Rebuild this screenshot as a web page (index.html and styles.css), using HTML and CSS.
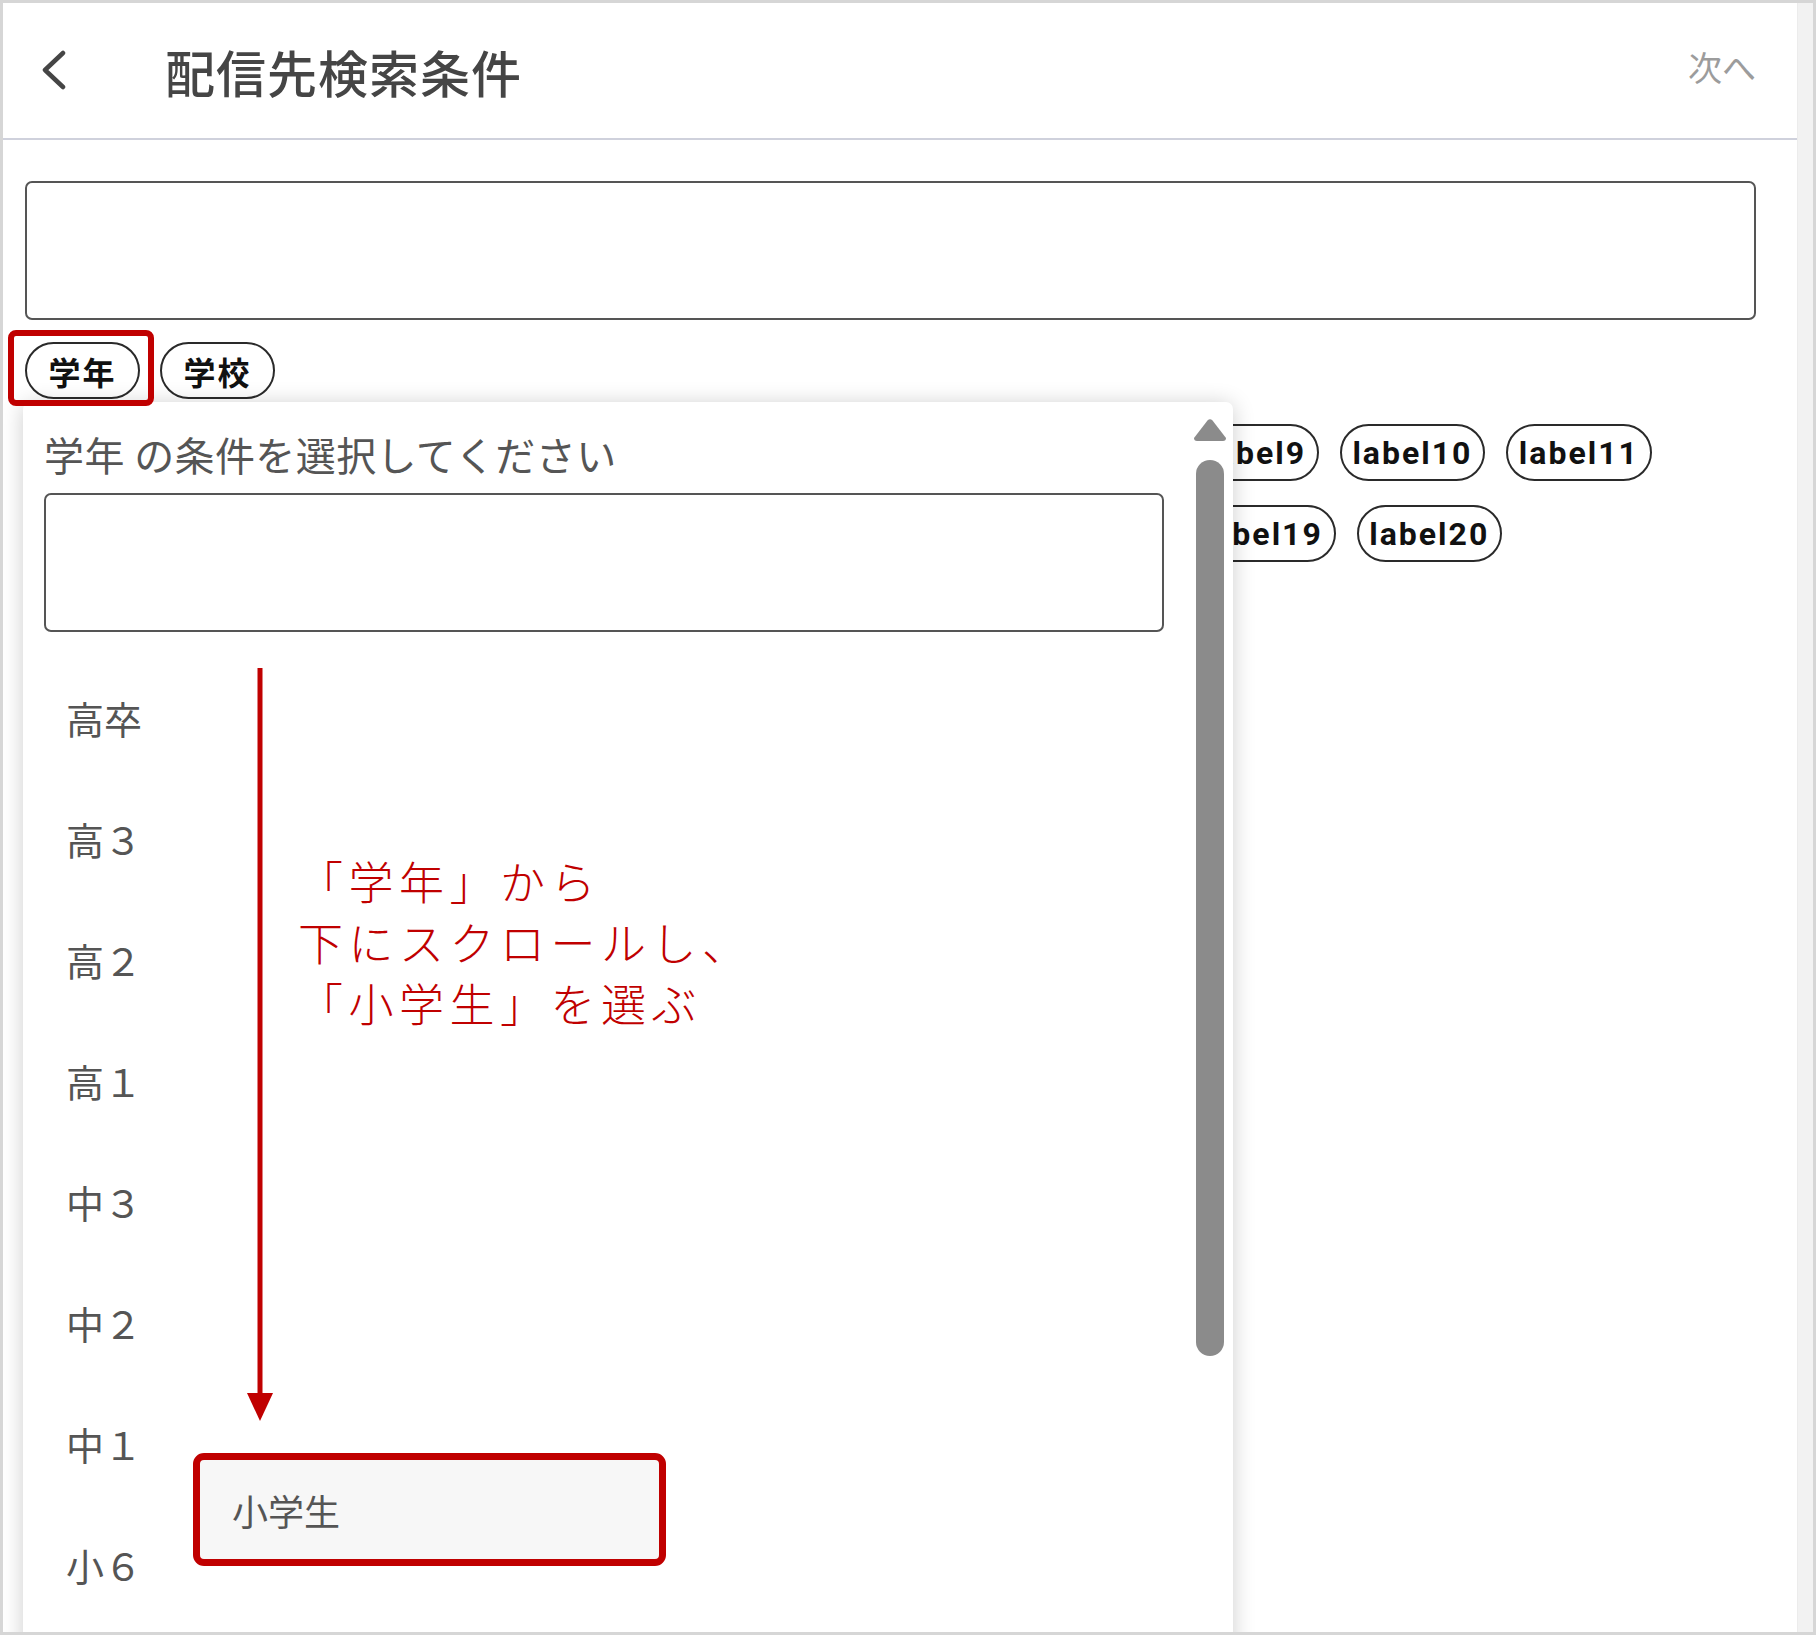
FILE: index.html
```html
<!DOCTYPE html>
<html lang="ja">
<head>
<meta charset="utf-8">
<title>配信先検索条件</title>
<link rel="stylesheet" href="styles.css">
</head>
<body>
<div class="frame">
  <div class="main">
    <header class="topbar">
      <svg class="back" width="26" height="40" viewBox="0 0 26 40"><polyline points="22,3 4,20 22,37" fill="none" stroke="#454545" stroke-width="4.5" stroke-linecap="round" stroke-linejoin="round"/></svg>
      <h1 class="title">配信先検索条件</h1>
      <span class="next">次へ</span>
    </header>
    <section class="content">
      <div class="search-box"></div>
      <div class="cat-row">
        <span class="chip cat">学年</span>
        <span class="chip cat">学校</span>
      </div>
      <div class="label-grid">
        <span class="chip lbl">label1</span>
        <span class="chip lbl">label2</span>
        <span class="chip lbl">label3</span>
        <span class="chip lbl">label4</span>
        <span class="chip lbl">label5</span>
        <span class="chip lbl">label6</span>
        <span class="chip lbl">label7</span>
        <span class="chip lbl">label8</span>
        <span class="chip lbl">label9</span>
        <span class="chip lbl">label10</span>
        <span class="chip lbl">label11</span>
        <span class="chip lbl">label12</span>
        <span class="chip lbl">label13</span>
        <span class="chip lbl">label14</span>
        <span class="chip lbl">label15</span>
        <span class="chip lbl">label16</span>
        <span class="chip lbl">label17</span>
        <span class="chip lbl">label18</span>
        <span class="chip lbl">label19</span>
        <span class="chip lbl">label20</span>
      </div>
    </section>
  </div>
  <div class="page-scroll"></div>

  <div class="dropdown">
    <div class="dd-body">
      <p class="dd-label">学年 の条件を選択してください</p>
      <div class="dd-input"></div>
      <ul class="dd-list">
        <li>高卒</li>
        <li>高３</li>
        <li>高２</li>
        <li>高１</li>
        <li>中３</li>
        <li>中２</li>
        <li>中１</li>
        <li>小６</li>
      </ul>
    </div>
    <div class="dd-scroll">
      <svg class="dd-up" width="32" height="23" viewBox="0 0 32 23"><path d="M13.5 2.5 Q16 0 18.5 2.5 L32 20 Q32 23 29 23 L3 23 Q0 23 0 20 Z" fill="#8b8b8b"/></svg>
      <div class="dd-thumb"></div>
    </div>
  </div>

  <div class="mark-chip"></div>
  <svg class="arrow" width="30" height="753" viewBox="0 0 30 753"><line x1="16" y1="0" x2="16" y2="728" stroke="#c00000" stroke-width="5"/><polygon points="3,725 29,725 16,753" fill="#c00000"/></svg>
  <p class="note">「学年」から<br>下にスクロールし、<br>「小学生」を選ぶ</p>
  <div class="mark-option"><span>小学生</span></div>
</div>
</body>
</html>
```

FILE: styles.css
```css
* { box-sizing: border-box; }
html, body { margin: 0; padding: 0; background: #fff; }
body { font-family: "Noto Sans CJK JP", "Noto Sans", sans-serif; }

.frame {
  position: relative;
  width: 1816px;
  height: 1635px;
  border: 3px solid #d6d6d6;
  overflow: hidden;
  display: flex;
  background: #fff;
}
.main { flex: 1; min-width: 0; }
.page-scroll { width: 16px; background: #f2f2f2; border-left: 1px solid #ececec; }

.topbar {
  height: 137px;
  border-bottom: 2px solid #cfd1dc;
  display: flex;
  align-items: center;
  padding: 0 41px 0 38px;
}
.back { display: block; margin-top: -2px; }
.title {
  margin: 0 0 0 98px;
  font-size: 50px;
  font-weight: 500;
  color: #454545;
  letter-spacing: 1px;
  line-height: 1;
}
.next {
  margin-left: auto;
  font-size: 34px;
  color: #9c9c9c;
  line-height: 1;
  margin-top: -8px;
}

.content { padding: 41px 41px 0 22px; }
.search-box {
  height: 139px;
  border: 2px solid #555;
  border-radius: 7px;
}
.cat-row { display: flex; gap: 20px; margin-top: 22px; }
.label-grid {
  display: flex;
  flex-wrap: wrap;
  column-gap: 21px;
  row-gap: 24px;
  margin-top: 25px;
}
.chip {
  display: inline-flex;
  align-items: center;
  justify-content: center;
  height: 57px;
  border: 2px solid #2a2a2a;
  border-radius: 29px;
  color: #111;
  font-weight: 700;
  line-height: 1;
  font-size: 32px;
}
.chip.cat { width: 115px; letter-spacing: 2px; font-family: "Noto Sans CJK JP", sans-serif; }
.chip.lbl { padding: 0 10.7px; font-family: Roboto, "Noto Sans", sans-serif; letter-spacing: 2px; }

.dropdown {
  position: absolute;
  left: 20px;
  top: 399px;
  width: 1210px;
  bottom: -40px;
  background: #fff;
  border-radius: 7px;
  box-shadow: 0 2px 22px rgba(0, 0, 0, 0.2);
  display: flex;
}
.dd-body { flex: 1; padding: 28px 22px 0 21px; }
.dd-label {
  margin: 0;
  font-size: 40px;
  line-height: 48px;
  letter-spacing: 0.4px;
  color: #555;
  white-space: nowrap;
}
.dd-input {
  margin-top: 15px;
  height: 139px;
  border: 2px solid #555;
  border-radius: 7px;
}
.dd-list { list-style: none; margin: 25px 0 0; padding: 0; }
.dd-list li {
  height: 121px;
  line-height: 121px;
  padding-left: 22px;
  font-size: 38px;
  letter-spacing: 0;
  color: #555;
}
.dd-scroll {
  width: 47px;
  display: flex;
  flex-direction: column;
  align-items: center;
  padding-top: 16px;
}
.dd-up { display: block; }
.dd-thumb {
  margin-top: 19px;
  width: 28px;
  height: 896px;
  border-radius: 14px;
  background: #8b8b8b;
}

.mark-chip {
  position: absolute;
  left: 5px;
  top: 327px;
  width: 146px;
  height: 76px;
  border: 6px solid #c00000;
  border-radius: 8px;
}
.arrow { position: absolute; left: 241px; top: 665px; display: block; }
.note {
  position: absolute;
  left: 295px;
  top: 847px;
  margin: 0;
  font-family: "Noto Sans CJK JP Light", "Noto Sans CJK JP DemiLight", "Noto Sans CJK JP", sans-serif;
  font-size: 45px;
  line-height: 61px;
  letter-spacing: 5.5px;
  font-weight: 300;
  color: #c00000;
  white-space: nowrap;
}
.mark-option {
  position: absolute;
  left: 190px;
  top: 1450px;
  width: 473px;
  height: 113px;
  border: 7px solid #c00000;
  border-radius: 11px;
  background: #f7f7f7;
  display: flex;
  align-items: center;
  padding-left: 32px;
}
.mark-option span { font-size: 36px; color: #555; line-height: 1; }
```
